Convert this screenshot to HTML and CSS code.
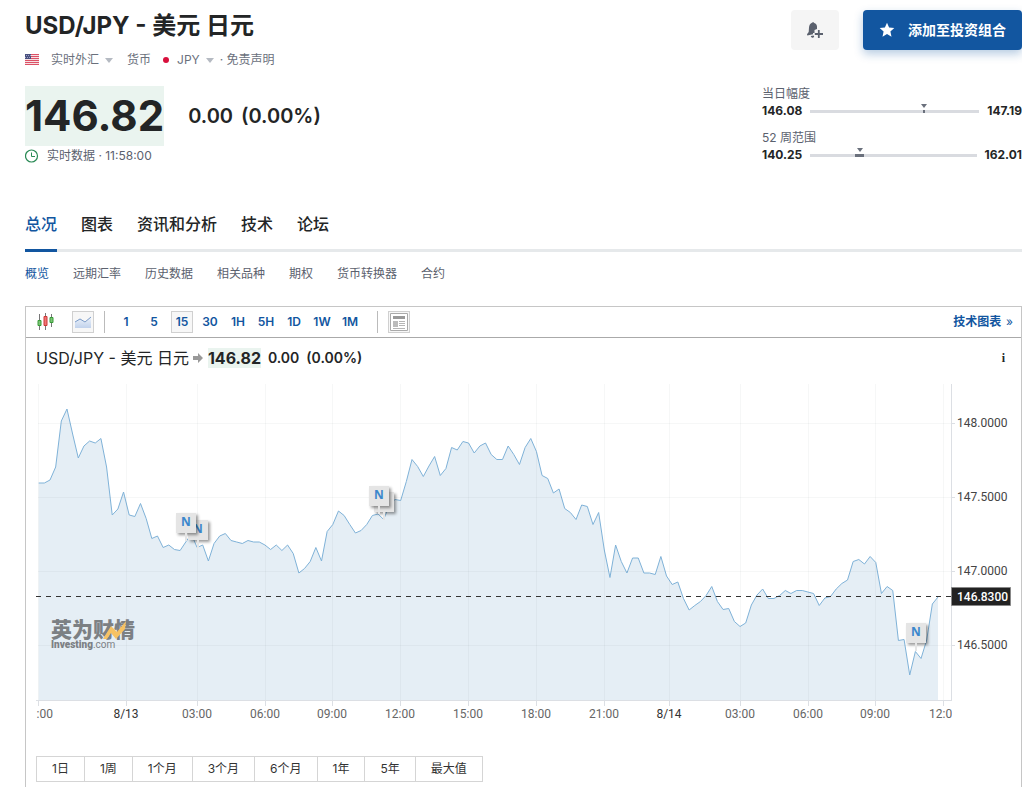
FILE: index.html
```html
<!DOCTYPE html>
<html lang="zh-CN">
<head>
<meta charset="utf-8">
<meta name="viewport" content="width=device-width, initial-scale=1">
<title>USD/JPY - 美元 日元</title>
<link rel="stylesheet" href="styles.css">
</head>
<body>
<main class="page">
  <header class="top">
    <div class="identity">
      <h1 class="title">USD/JPY - 美元 日元</h1>
      <div class="meta">
        <svg class="flag" viewBox="0 0 14 11" aria-hidden="true">
          <path fill="#f6dfe2" d="M0 0h14v11H0z"/>
          <path stroke="#dc5166" d="M0 .5h14M0 2.5h14M0 4.5h14M0 6.5h14M0 8.5h14M0 10.5h14"/>
          <path fill="#49507f" d="M0 0h6v5H0z"/>
          <path stroke="#9ca1c4" stroke-dasharray="1 1" d="M1 1.5h5M0 3.5h5"/>
        </svg>
        <button class="pick pick-market" type="button">实时外汇<i class="caret"></i></button>
        <span class="kind">货币</span>
        <i class="dot"></i>
        <button class="pick pick-code" type="button">JPY<i class="caret"></i></button>
        <span class="legal">· <a href="#">免责声明</a></span>
      </div>
    </div>
    <div class="actions">
      <button class="alert" type="button" aria-label="创建提醒">
        <svg width="16" height="16" viewBox="0 0 16 16" aria-hidden="true">
          <path fill="#5b616e" d="M5 .8L6.200 0l1 1c1.700.5 2.700 1.700 2.800 3.500V7L7.500 8v3H6v1.300L.3 13.500 0 12.300l1.700-2.300.3-4.500C2.100 3.300 3.200 1.500 5 .8zM3.800 14l3-.6.4 1.700-1.400.7c-1 0-1.800-.7-2-1.800z"/>
          <path stroke="#5b616e" stroke-width="1.800" d="M11.800 8v8M7.800 12h8.200"/>
        </svg>
      </button>
      <button class="add" type="button">
        <svg width="16" height="16" viewBox="0 0 16 16" aria-hidden="true"><path fill="#fff" d="m8 .8 2.100 4.800 5.200.5-3.900 3.500 1.100 5.100L8 12l-4.500 2.700 1.100-5.100L.7 6.100l5.200-.5z"/></svg>
        <span>添加至投资组合</span>
      </button>
    </div>
  </header>

  <section class="quote">
    <div>
      <div class="price-row">
        <strong class="price">146.82</strong>
        <span class="change">0.00</span>
        <span class="change">(0.00%)</span>
      </div>
      <div class="time">
        <svg width="14" height="14" viewBox="0 0 14 14" fill="none" stroke="#2a8a55" aria-hidden="true"><circle cx="6.500" cy="7" r="6" stroke-width="1.200"/><path d="M6.500 3.500v4h3.500"/></svg>
        <span>实时数据 · 11:58:00</span>
      </div>
    </div>
    <div class="ranges">
      <div class="range">
        <div class="range-name">当日幅度</div>
        <div class="range-line">
          <b>146.08</b>
          <span class="track"><i class="mark" style="left:67%"></i><i class="fill" style="left:66.400%;width:1.200%"></i></span>
          <b>147.19</b>
        </div>
      </div>
      <div class="range">
        <div class="range-name">52 周范围</div>
        <div class="range-line">
          <b>140.25</b>
          <span class="track"><i class="mark" style="left:30.200%"></i><i class="fill" style="left:27%;width:5.500%"></i></span>
          <b>162.01</b>
        </div>
      </div>
    </div>
  </section>

  <nav class="tabs">
    <a class="on" href="#">总况</a><a href="#">图表</a><a href="#">资讯和分析</a><a href="#">技术</a><a href="#">论坛</a>
  </nav>
  <nav class="subtabs">
    <a class="on" href="#">概览</a><a href="#">远期汇率</a><a href="#">历史数据</a><a href="#">相关品种</a><a href="#">期权</a><a href="#">货币转换器</a><a href="#">合约</a>
  </nav>

  <section class="panel">
    <div class="toolbar">
      <button class="tool candle-tool" type="button" aria-label="蜡烛图">
        <svg width="18" height="18" viewBox="0 0 18 18" aria-hidden="true">
          <path stroke="#777" d="M2.500 1v16M8.500 0v17M14.500 1v13"/>
          <path fill="#7cc576" stroke="#399b39" d="M1 7.500h3v5H1zM13 4.500h3v5h-3z"/>
          <path fill="#f07474" stroke="#cc3939" d="M7 3.500h3v9H7z"/>
        </svg>
      </button>
      <button class="tool framed area-tool" type="button" aria-label="面积图">
        <svg width="18" height="14" viewBox="0 0 18 14" aria-hidden="true">
          <defs><linearGradient id="mini" x2="0" y2="1"><stop stop-color="#edf3fb"/><stop offset="1" stop-color="#c1d2ec"/></linearGradient></defs>
          <path fill="url(#mini)" d="M1 7l5-4 5 4 6-5v11H1z"/>
          <path fill="none" stroke="#7c9cc8" d="M1 7l5-3 5 3 6-5"/>
        </svg>
      </button>
      <i class="rule"></i>
      <div class="periods">
        <button type="button">1</button><button type="button">5</button><button class="framed" type="button">15</button><button type="button">30</button><button type="button">1H</button><button type="button">5H</button><button type="button">1D</button><button type="button">1W</button><button type="button">1M</button>
      </div>
      <i class="rule rule-news"></i>
      <button class="tool framed" type="button" aria-label="新闻">
        <svg width="18" height="18" viewBox="0 0 18 18" aria-hidden="true">
          <path fill="#fff" stroke="#aaa" d="M.5.5h17v17H.5z"/>
          <path fill="#999" d="M3 3h12v3H3z"/>
          <path fill="#bbb" d="M3 8h5v6H3z"/>
          <path stroke="#b5b5b5" d="M9 8.500h6M9 10.500h6M9 12.500h6M3 15.500h12"/>
        </svg>
      </button>
      <a class="tech" href="#">技术图表 <span>»</span></a>
    </div>

    <div class="caption">
      <span class="pair">USD/JPY - 美元 日元</span>
      <svg class="arrow" width="10" height="10" viewBox="0 0 10 10" aria-hidden="true"><path fill="#999" d="M0 3h5V0l5 5-5 5V7H0z"/></svg>
      <b class="last">146.82</b>
      <b class="delta">0.00</b>
      <b class="delta">(0.00%)</b>
      <button class="info" type="button">i</button>
    </div>

    <svg class="chart" viewBox="26 384 995 342" role="img" aria-label="USD/JPY 走势图">
      <defs>
        <clipPath id="plot"><path d="M36 384h916v342H36z"/></clipPath>
        <filter id="lift" x="-30%" y="-30%" width="180%" height="180%"><feDropShadow dx="2" dy="2" stdDeviation="1.500" flood-opacity=".4"/></filter>
        <g id="pin"><path fill="#e5e5e5" filter="url(#lift)" d="M-10-10h20v20h-20z"/><path fill="#e5e5e5" d="M-1 10h2v8h-2z"/></g>
      </defs>
      <path class="area" transform="translate(38.700 0) scale(5.656 1)" d="M0 700V483L1 483 2 480 3 467 4 421 5 409 6 434 7 458 8 446 9 441 10 443 11 438.500 12 467 13 515 14 509 15 492 16 515 17 516.500 18 503.500 19 518.500 20 538.500 21 536 22 547.500 23 545 24 549.500 25 550.500 26 542 27 534 28 547.500 29 545 30 561 31 543.500 32 536 33 533.500 34 540.500 35 542 36 543.500 37 540.500 38 542 39 542 40 545 41 549.500 42 545 43 550.500 44 545 45 553.500 46 573 47 568.500 48 561.500 49 547.500 50 561 51 531.500 52 524.500 53 511 54 515.500 55 524.500 56 533 57 530.500 58 524.500 59 515.500 60 514 61 519.500 62 505 63 499.500 64 500.500 65 481.500 66 459.500 67 466.500 68 476.500 69 466 70 456.500 71 475.500 72 468.500 73 447.500 74 450 75 441.500 76 443 77 453 78 446 79 443 80 454.500 81 459.500 82 459.500 83 446 84 454.500 85 464.500 86 447.500 87 438.500 88 451.500 89 475.500 90 478.500 91 493 92 489 93 508.500 94 512.500 95 519.500 96 505 97 506.500 98 524.500 99 512.500 100 550 101 577.500 102 545 103 561.500 104 573 105 558 106 558 107 573 108 573 109 574.500 110 556.500 111 576 112 584.500 113 582 114 598.500 115 610 116 605.500 117 601.500 118 595.500 119 586.500 120 601.500 121 609.500 122 608.500 123 621.500 124 626.500 125 623 126 605 127 595 128 589 129 598.500 130 598.500 131 595.500 132 590.500 133 593.500 134 590.500 135 590.500 136 592 137 593.500 138 605.500 139 598 140 596.500 141 589 142 583.500 143 580 144 561.500 145 559.500 146 564 147 556.500 148 562.500 149 593.500 150 586.500 151 590.500 152 640.500 153 639.500 154 675 155 651.500 156 658.500 157 640 158 604 159 597V700z"/>
      <path class="line" transform="translate(38.700 0) scale(5.656 1)" d="M0 483L1 483 2 480 3 467 4 421 5 409 6 434 7 458 8 446 9 441 10 443 11 438.500 12 467 13 515 14 509 15 492 16 515 17 516.500 18 503.500 19 518.500 20 538.500 21 536 22 547.500 23 545 24 549.500 25 550.500 26 542 27 534 28 547.500 29 545 30 561 31 543.500 32 536 33 533.500 34 540.500 35 542 36 543.500 37 540.500 38 542 39 542 40 545 41 549.500 42 545 43 550.500 44 545 45 553.500 46 573 47 568.500 48 561.500 49 547.500 50 561 51 531.500 52 524.500 53 511 54 515.500 55 524.500 56 533 57 530.500 58 524.500 59 515.500 60 514 61 519.500 62 505 63 499.500 64 500.500 65 481.500 66 459.500 67 466.500 68 476.500 69 466 70 456.500 71 475.500 72 468.500 73 447.500 74 450 75 441.500 76 443 77 453 78 446 79 443 80 454.500 81 459.500 82 459.500 83 446 84 454.500 85 464.500 86 447.500 87 438.500 88 451.500 89 475.500 90 478.500 91 493 92 489 93 508.500 94 512.500 95 519.500 96 505 97 506.500 98 524.500 99 512.500 100 550 101 577.500 102 545 103 561.500 104 573 105 558 106 558 107 573 108 573 109 574.500 110 556.500 111 576 112 584.500 113 582 114 598.500 115 610 116 605.500 117 601.500 118 595.500 119 586.500 120 601.500 121 609.500 122 608.500 123 621.500 124 626.500 125 623 126 605 127 595 128 589 129 598.500 130 598.500 131 595.500 132 590.500 133 593.500 134 590.500 135 590.500 136 592 137 593.500 138 605.500 139 598 140 596.500 141 589 142 583.500 143 580 144 561.500 145 559.500 146 564 147 556.500 148 562.500 149 593.500 150 586.500 151 590.500 152 640.500 153 639.500 154 675 155 651.500 156 658.500 157 640 158 604 159 597"/>
      <path class="grid" d="M38.500 384v316M126.500 384v316M197.500 384v316M265.500 384v316M332.500 384v316M400.500 384v316M468.500 384v316M536.500 384v316M604.500 384v316M669.500 384v316M740.500 384v316M808.500 384v316M875.500 384v316M943.500 384v316M38 423.500h913M38 497.500h913M38 571.500h913M38 645.500h913"/>
      <path class="axis" d="M951.500 384v316.500M36 700.500h916M38.500 700v6M126.500 700v6M197.500 700v6M265.500 700v6M332.500 700v6M400.500 700v6M468.500 700v6M536.500 700v6M604.500 700v6M669.500 700v6M740.500 700v6M808.500 700v6M875.500 700v6M943.500 700v6M951 423.500h4M951 497.500h4M951 571.500h4M951 645.500h4"/>
      <g class="brand">
        <text class="brand-cn" x="51" y="637">英为财情</text>
        <path fill="#f6c264" d="M103 639l8-13 6 6 9-11-1 8-9 10-5-6-4 6z"/>
        <text class="brand-en" x="51" y="648">Investing<tspan class="brand-com">.com</tspan></text>
      </g>
      <path class="now" d="M36 596.500h915"/>
      <use href="#pin" x="198" y="530"/><text class="news" x="198" y="532.500">N</text>
      <use href="#pin" x="186" y="523"/><text class="news" x="186" y="526">N</text>
      <use href="#pin" x="384" y="502"/>
      <use href="#pin" x="379" y="496"/><text class="news" x="379" y="499">N</text>
      <use href="#pin" x="916" y="633"/><text class="news" x="916" y="636">N</text>
      <g class="ylabels">
        <text x="957" y="427">148.0000</text><text x="957" y="501">147.5000</text><text x="957" y="575">147.0000</text><text x="957" y="649">146.5000</text>
      </g>
      <path fill="#222" stroke="#888" d="M951.500 587.500h59v18h-59z"/>
      <text class="tag" x="957" y="601">146.8300</text>
      <g class="xlabels" clip-path="url(#plot)">
        <text x="38" y="718">21:00</text><text x="126" y="718" class="day">8/13</text><text x="197" y="718">03:00</text><text x="265" y="718">06:00</text><text x="332" y="718">09:00</text><text x="400" y="718">12:00</text><text x="468" y="718">15:00</text><text x="536" y="718">18:00</text><text x="604" y="718">21:00</text><text x="669" y="718" class="day">8/14</text><text x="740" y="718">03:00</text><text x="808" y="718">06:00</text><text x="875" y="718">09:00</text><text x="944" y="718">12:00</text>
      </g>
    </svg>

    <div class="spans">
      <button type="button">1日</button><button type="button">1周</button><button type="button">1个月</button><button type="button">3个月</button><button type="button">6个月</button><button type="button">1年</button><button type="button">5年</button><button type="button">最大值</button>
    </div>
  </section>
</main>
</body>
</html>
```

FILE: styles.css
```css
* { box-sizing: border-box; }
body {
  margin: 0;
  background: #fff;
  color: #232526;
  font-family: Inter, "Noto Sans CJK SC", sans-serif;
  font-size: 12px;
  line-height: 16px;
  overflow: hidden;
}
button {
  margin: 0;
  padding: 0;
  border: 0;
  background: none;
  color: inherit;
  font: inherit;
  cursor: pointer;
}
a { color: inherit; text-decoration: none; }
svg { display: block; flex: none; }
.page { padding-left: 25px; }

.top {
  display: flex;
  justify-content: space-between;
  align-items: flex-start;
  padding-top: 10px;
}
.title { margin: 0; font-size: 24px; line-height: 32px; font-weight: 700; }
.meta {
  display: flex;
  align-items: center;
  margin-top: 10px;
  color: #6a707c;
}
.flag { width: 14px; height: 11px; margin-bottom: 1px; }
.pick { display: flex; align-items: center; gap: 6px; }
.pick-market { margin: 0 14px 0 12px; }
.pick-code { margin: 0 6px 0 8px; }
.caret {
  border: 4px solid transparent;
  border-top: 5px solid #b5bac2;
  border-bottom: 0;
}
.dot { width: 6px; height: 6px; margin-left: 12px; border-radius: 50%; background: #d80f3c; }

.actions { display: flex; gap: 24px; }
.alert {
  display: grid;
  place-items: center;
  width: 48px;
  height: 40px;
  border-radius: 4px;
  background: #f5f5f5;
}
.add {
  display: flex;
  align-items: center;
  gap: 13px;
  height: 40px;
  padding: 0 16px;
  border-radius: 4px;
  background: #1256a0;
  box-shadow: 0 4px 10px rgba(18, 86, 160, .3);
  color: #fff;
  font-size: 14px;
  font-weight: 700;
}

.quote {
  display: flex;
  justify-content: space-between;
  align-items: flex-start;
  margin-top: 18px;
}
.price-row { display: flex; align-items: center; }
.price {
  margin-right: 16px;
  background: #eaf4ef;
  font-size: 42px;
  line-height: 60px;
  font-weight: 700;
}
.change { margin-left: 8px; font-size: 20px; line-height: 28px; font-weight: 600; }
.time { display: flex; align-items: center; gap: 8px; margin-top: 2px; color: #5b616e; }
.ranges { width: 260px; }
.range { margin-bottom: 10px; }
.range-name { color: #5b616e; }
.range-line { display: flex; align-items: center; gap: 8px; line-height: 18px; }
.range-line b { font-weight: 700; }
.track { position: relative; flex: 1; height: 3px; background: #d9dbe0; }
.fill { position: absolute; top: 0; height: 3px; background: #6a707c; }
.mark {
  position: absolute;
  top: -6px;
  margin-left: -3px;
  border: 3px solid transparent;
  border-top: 4px solid #6a707c;
  border-bottom: 0;
}

.tabs {
  display: flex;
  gap: 24px;
  margin-top: 30px;
  box-shadow: inset 0 -3px #e6e9eb;
  font-size: 16px;
  line-height: 24px;
  font-weight: 500;
}
.tabs a { padding: 8px 0 13px; border-bottom: 3px solid transparent; }
.tabs .on { border-color: #1256a0; color: #1256a0; }
.subtabs { display: flex; gap: 24px; margin-top: 14px; color: #5b616e; }
.subtabs .on { color: #1256a0; }

.panel { margin-top: 24px; padding-bottom: 16px; border: 1px solid #c6c6c6; }
.toolbar {
  display: flex;
  align-items: center;
  height: 31px;
  padding: 0 8px 0 10px;
  border-bottom: 1px solid #aaa;
  color: #1256a0;
  font-weight: 600;
}
.tool { display: grid; place-items: center; width: 22px; height: 22px; }
.candle-tool { width: 20px; }
.framed { border: 1px solid #d0d0d0; background: #f7f7f7; }
.area-tool { margin-left: 16px; }
.rule { width: 1px; height: 22px; margin: 0 10px; background: #bbb; }
.rule-news { margin-left: 16px; }
.periods { display: flex; gap: 6px; }
.periods button { width: 22px; height: 22px; white-space: nowrap; }
.tech { margin-left: auto; font-weight: 700; }
.tech span { margin-left: 2px; font-weight: 400; }

.caption { display: flex; align-items: center; height: 40px; padding: 0 14px 0 10px; }
.pair { font-size: 16px; }
.arrow { margin: 0 5px 0 4px; }
.last { background: #eaf4ef; font-size: 16px; line-height: 20px; font-weight: 700; }
.delta { margin-left: 7px; font-size: 14px; font-weight: 600; }
.info {
  margin-left: auto;
  padding: 0 2px;
  font-family: "Liberation Serif", serif;
  font-weight: 700;
}

.chart { width: 100%; margin-top: 6px; font-family: Roboto, sans-serif; font-size: 12px; }
.area { fill: #e5eef5; }
.line { fill: none; stroke: #7fb2d8; vector-effect: non-scaling-stroke; }
.grid { fill: none; stroke: rgba(80, 90, 100, .05); }
.axis { fill: none; stroke: #dcdfe4; }
.now { stroke: #333; stroke-dasharray: 5 5; }
.news { fill: #3c87cc; font-family: "Open Sans", sans-serif; font-weight: 700; text-anchor: middle; }
.ylabels { fill: #444; }
.tag { fill: #fff; font-weight: 500; }
.xlabels { fill: #666; text-anchor: middle; }
.day { fill: #333; }
.brand { fill: #7c8084; }
.brand-cn { font-family: "Noto Sans CJK SC", sans-serif; font-size: 21px; font-weight: 900; }
.brand-en { font-family: Roboto, sans-serif; font-size: 10px; font-weight: 900; }
.brand-com { font-weight: 400; }

.spans { display: flex; margin: 30px 10px 0; color: #333; }
.spans button {
  height: 26px;
  padding: 0 15px;
  border: 1px solid #d5d5d5;
}
.spans button + button { border-left: 0; }
```
